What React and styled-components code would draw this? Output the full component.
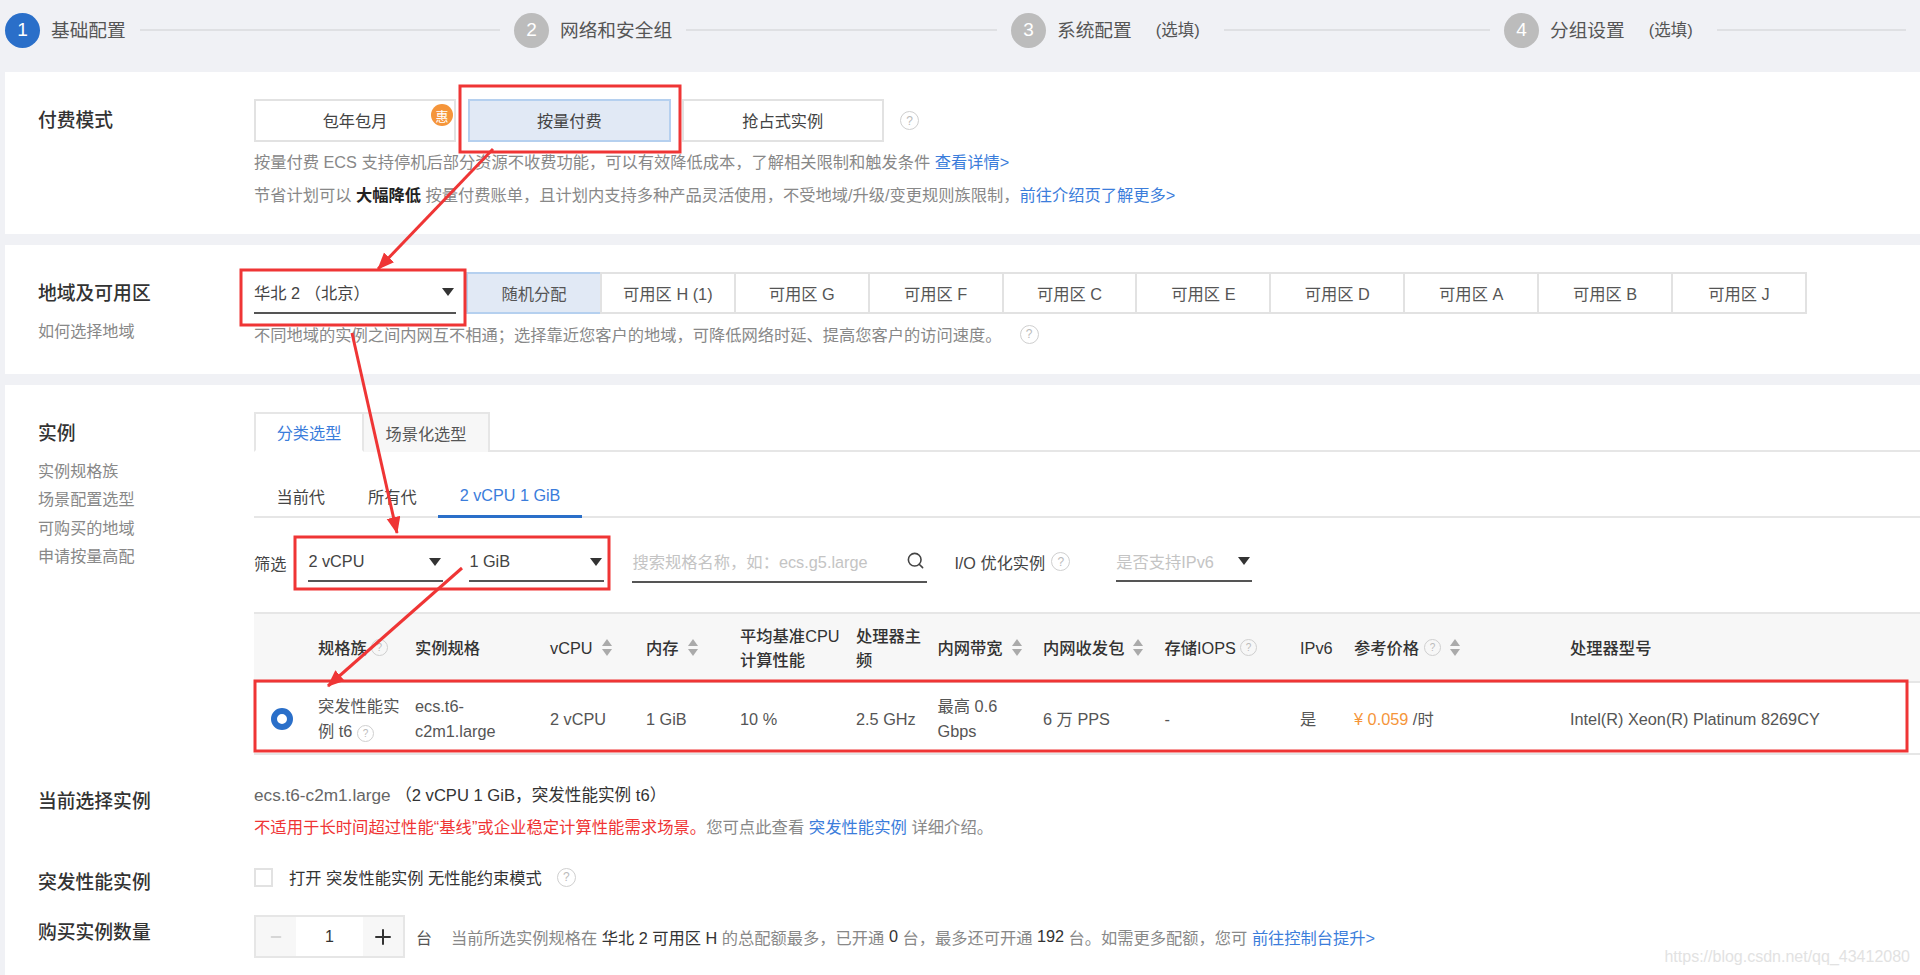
import styled, { createGlobalStyle } from "styled-components";
import { Search, Plus, Minus } from "lucide-react";

const Global = createGlobalStyle`
    html, body {
        margin: 0;
        padding: 0;
        overflow: hidden;
        background-color: #f0f1f5;
    }
    * {
        box-sizing: border-box;
    }
`
const Page = styled.div`
    position: relative;
    display: flex;
    flex-direction: column;
    width: 1920px;
    height: 975px;
    overflow: hidden;
    background-color: #f0f1f5;
    font-family: "Liberation Sans", "Noto Sans CJK SC", sans-serif;
    font-size: 16px;
    color: #555;
`
const Steps = styled.div`
    display: flex;
    align-items: center;
    height: 72px;
    padding: 0 0 12px 5px;
`
const Step = styled.div`
    display: flex;
    align-items: center;
    flex: ${({$last})=>$last ? "1" : "none"};
    width: ${({$w})=>$w ? `${$w}px` : "auto"};
`
const StepNum = styled.div`
    display: flex;
    justify-content: center;
    align-items: center;
    flex: none;
    width: 35px;
    height: 35px;
    border-radius: 50%;
    font-size: 19px;
    color: #fff;
    background-color: ${({$on})=>$on ? "#2a6fc9" : "#bcbcbc"};
`
const StepName = styled.div`
    margin-left: 11px;
    padding-bottom: 4px;
    font-size: 18.7px;
    color: #555;
    white-space: nowrap;
`
const StepOpt = styled.div`
    margin-left: 24px;
    margin-right: 10px;
    padding-bottom: 3px;
    font-size: 16.5px;
    color: #555;
    white-space: nowrap;
`
const StepLine = styled.div`
    flex: 1;
    height: 2px;
    margin: 0 14px;
    background-color: #dfe0e3;
`
const Section = styled.section`
    display: flex;
    flex-direction: column;
    flex: ${({$fill})=>$fill ? "1" : "none"};
    height: ${({$h})=>$h ? `${$h}px` : "auto"};
    margin: 0 0 ${({$fill})=>$fill ? 0 : 11}px 5px;
    padding: 27px 0 0 33px;
    background-color: #fff;
`
const Row = styled.div`
    display: flex;
    margin-top: ${({$mt})=>$mt || 0}px;
`
const Side = styled.div`
    flex: none;
    width: 216px;
`
const Main = styled.div`
    flex: 1;
    min-width: 0;
`
const Label = styled.div`
    font-size: 18.8px;
    line-height: 44px;
    font-weight: 500;
    color: #333;
`
const SideLinks = styled.div`
    margin-top: 1px;
    font-size: 16.1px;
    line-height: 28.3px;
    color: #888;
`
const BtnRow = styled.div`
    display: flex;
    align-items: center;
`
const PayBtn = styled.div`
    position: relative;
    display: flex;
    justify-content: center;
    align-items: center;
    width: ${({$w})=>$w}px;
    height: 43px;
    margin-right: ${({$mr})=>$mr}px;
    padding-bottom: 1px;
    font-size: 16.2px;
    color: #444;
    border: 2px solid ${({$on})=>$on ? "#b5d0ef" : "#e2e2e2"};
    background-color: ${({$on})=>$on ? "#e1e9f5" : "#fff"};
`
const Badge = styled.div`
    position: absolute;
    top: 3px;
    right: 1px;
    display: flex;
    justify-content: center;
    align-items: center;
    width: 22px;
    height: 22px;
    border-radius: 50%;
    font-size: 13px;
    color: #fff;
    background-color: #f5953a;
`
const Help = styled.span`
    display: inline-flex;
    justify-content: center;
    align-items: center;
    flex: none;
    width: ${({$s})=>$s || 19}px;
    height: ${({$s})=>$s || 19}px;
    margin-left: ${({$ml})=>$ml || 0}px;
    border: 1.5px solid #cfcfcf;
    border-radius: 50%;
    font-size: ${({$s})=>($s || 19) - 7}px;
    color: #bbb;
`
const Desc = styled.div`
    display: flex;
    align-items: center;
    height: ${({$h})=>$h || 33}px;
    margin-top: ${({$mt})=>$mt || 0}px;
    font-size: 16.25px;
    color: #888;
    white-space: pre;
`
const Link = styled.span`
    color: #3b7ddb;
`
const Strong = styled.b`
    font-weight: 700;
    color: #222;
`
const Dark = styled.span`
    color: #333;
`
const Red = styled.span`
    color: #ef3535;
`
const Select = styled.div`
    display: flex;
    justify-content: space-between;
    align-items: center;
    flex: none;
    width: ${({$w})=>$w}px;
    height: ${({$h})=>$h || 38}px;
    margin-left: ${({$ml})=>$ml || 0}px;
    padding: 0 2px ${({$ph})=>$ph ? 3 : 1}px 0;
    font-size: 16.3px;
    color: ${({$ph})=>$ph ? "#c4c4c4" : "#444"};
    border-bottom: 2px solid #555;
    white-space: pre;
`
const Caret = styled.span`
    flex: none;
    width: 0;
    height: 0;
    border-left: 6px solid transparent;
    border-right: 6px solid transparent;
    border-top: 8px solid #333;
`
const Zones = styled.div`
    display: flex;
    margin-left: 10px;
    border: 2px solid #e2e2e2;
    border-left: none;
`
const Zone = styled.div`
    display: flex;
    justify-content: center;
    align-items: center;
    width: 133.9px;
    height: 42px;
    margin-top: -2px;
    margin-bottom: -2px;
    font-size: 16.3px;
    color: #555;
    border-left: 2px solid ${({$on})=>$on ? "#b5d0ef" : "#e2e2e2"};
    border-top: 2px solid ${({$on})=>$on ? "#b5d0ef" : "#e2e2e2"};
    border-bottom: 2px solid ${({$on})=>$on ? "#b5d0ef" : "#e2e2e2"};
    background-color: ${({$on})=>$on ? "#e1e9f5" : "#fff"};
`
const Tabs = styled.div`
    display: flex;
    height: 40px;
    border-bottom: 2px solid #e6e6e6;
`
const Tab = styled.div`
    display: flex;
    justify-content: center;
    align-items: center;
    width: ${({$w})=>$w}px;
    height: 40px;
    font-size: 16.2px;
    color: ${({$on})=>$on ? "#3b7ddb" : "#555"};
    border: 2px solid #e6e6e6;
    border-left-width: ${({$on})=>$on ? 2 : 0}px;
    border-bottom: ${({$on})=>$on ? "2px solid #fff" : "none"};
    background-color: ${({$on})=>$on ? "#fff" : "#f7f7f7"};
`
const SubTabs = styled.div`
    display: flex;
    align-items: flex-end;
    height: 66px;
    padding-left: 1px;
    border-bottom: 2px solid #e6e6e6;
`
const SubTab = styled.div`
    display: flex;
    justify-content: center;
    align-items: center;
    height: 45px;
    padding: 3px 21.5px 0;
    margin-bottom: -2px;
    font-size: 16.2px;
    color: ${({$on})=>$on ? "#3b7ddb" : "#444"};
    border-bottom: 3px solid ${({$on})=>$on ? "#2a6fc9" : "transparent"};
`
const Filters = styled.div`
    display: flex;
    align-items: center;
    height: 94px;
    padding-bottom: 4px;
    font-size: 16.2px;
    color: #444;
`
const IoLabel = styled.div`
    display: flex;
    align-items: center;
    margin-left: 27px;
    padding-bottom: 3px;
`
const Table = styled.div`
    border-top: 2px solid #e6e6e6;
`
const Cols = styled.div`
    display: grid;
    grid-template-columns: 64px 97px 135px 96px 94px 116px 81.5px 105.5px 121.5px 135.5px 54px 216px 1fr;
    align-items: center;
    height: ${({$h})=>$h}px;
    padding-top: ${({$head})=>$head ? 0 : 2}px;
    border-bottom: 2px solid #e6e6e6;
    background-color: ${({$head})=>$head ? "#f7f7f7" : "#fff"};
    color: ${({$head})=>$head ? "#333" : "#555"};
    font-weight: ${({$head})=>$head ? 500 : 400};
    font-size: 16.3px;
    line-height: ${({$head})=>$head ? 24 : 25}px;
`
const Cell = styled.div`
    display: flex;
    align-items: center;
    white-space: nowrap;
`
const Radio = styled.div`
    width: 22px;
    height: 22px;
    margin-left: 17px;
    border: 6px solid #2a6fc9;
    border-radius: 50%;
    background-color: #fff;
`
const SortIcon = styled.svg`
    flex: none;
    width: 10px;
    height: 17px;
    margin-left: ${({$ml})=>$ml || 9}px;
`
const Price = styled.span`
    color: #f5953a;
`
const Lines = styled.div`
    font-size: 16.35px;
    line-height: 31.5px;
    color: #888;
    white-space: pre;
`
const EcsName = styled.span`
    font-size: 17.2px;
    color: #666;
`
const EcsSpec = styled.span`
    font-size: 16.6px;
    color: #333;
`
const Check = styled.div`
    flex: none;
    width: 19px;
    height: 19px;
    border: 2px solid #e2e2e2;
    background-color: #fff;
`
const Inline = styled.div`
    display: flex;
    align-items: center;
    height: 34px;
    padding-bottom: 2px;
    font-size: 16.25px;
    color: #333;
    white-space: pre;
`
const CheckText = styled.span`
    margin-left: 16px;
`
const Stepper = styled.div`
    display: flex;
    width: 151px;
    height: 43px;
    border: 2px solid #e6e6e6;
`
const StepBtn = styled.div`
    display: flex;
    justify-content: center;
    align-items: center;
    width: 40px;
    background-color: #f7f7f7;
`
const StepVal = styled.div`
    display: flex;
    justify-content: center;
    align-items: center;
    flex: 1;
    font-size: 16px;
    color: #333;
`
const QtyRow = styled.div`
    display: flex;
    align-items: center;
    margin-top: 4px;
    font-size: 16.25px;
    color: #888;
    white-space: pre;
`
const Unit = styled.span`
    margin: 0 19px 0 11px;
    color: #555;
    font-size: 16px;
`
const Watermark = styled.div`
    position: absolute;
    right: 10px;
    bottom: 9px;
    font-size: 16px;
    color: #e2e2e2;
`
const Overlay = styled.svg`
    position: absolute;
    left: 0;
    top: 0;
    width: 1920px;
    height: 975px;
    pointer-events: none;
`

const zones = ["可用区 H (1)", "可用区 G", "可用区 F", "可用区 C", "可用区 E", "可用区 D", "可用区 A", "可用区 B", "可用区 J"]

function Sort({ml}) {
    return (
        <SortIcon viewBox="0 0 10 17" $ml={ml}>
            <path d="M5 0 L10 7 L0 7 Z" fill="#aaa"/>
            <path d="M5 17 L10 10 L0 10 Z" fill="#aaa"/>
        </SortIcon>
    )
}

function Annotations() {
    const red = "#ef3535"
    return (
        <Overlay viewBox="0 0 1920 975">
            <defs>
                <marker id="head" markerUnits="userSpaceOnUse" markerWidth="18" markerHeight="16" refX="16" refY="7" orient="auto">
                    <path d="M0 0 L17 7 L0 14 Z" fill={red}/>
                </marker>
            </defs>
            <g fill="none" stroke={red} strokeWidth="3">
                <rect x="460" y="86" width="220" height="66"/>
                <rect x="241" y="270" width="224" height="55"/>
                <rect x="295" y="537" width="314" height="52"/>
                <rect x="255" y="681" width="1652" height="70"/>
                <line x1="493" y1="149" x2="378" y2="269" markerEnd="url(#head)"/>
                <line x1="352" y1="333" x2="397" y2="533" markerEnd="url(#head)"/>
                <line x1="462" y1="568" x2="328" y2="686" markerEnd="url(#head)"/>
            </g>
        </Overlay>
    )
}

export default function App() {
    return <>
        <Global/>
        <Page>
            <Steps>
                <Step $w={509}>
                    <StepNum $on>1</StepNum>
                    <StepName>基础配置</StepName>
                    <StepLine/>
                </Step>
                <Step $w={497}>
                    <StepNum>2</StepNum>
                    <StepName>网络和安全组</StepName>
                    <StepLine/>
                </Step>
                <Step $w={493}>
                    <StepNum>3</StepNum>
                    <StepName>系统配置</StepName>
                    <StepOpt>(选填)</StepOpt>
                    <StepLine/>
                </Step>
                <Step $last>
                    <StepNum>4</StepNum>
                    <StepName>分组设置</StepName>
                    <StepOpt>(选填)</StepOpt>
                    <StepLine/>
                </Step>
            </Steps>

            <Section $h={162}>
                <Row>
                    <Side><Label>付费模式</Label></Side>
                    <Main>
                        <BtnRow>
                            <PayBtn $w={202} $mr={12}>包年包月<Badge>惠</Badge></PayBtn>
                            <PayBtn $w={202.5} $mr={11} $on>按量付费</PayBtn>
                            <PayBtn $w={202.5} $mr={16}>抢占式实例</PayBtn>
                            <Help>?</Help>
                        </BtnRow>
                        <Desc $mt={2}>按量付费 ECS 支持停机后部分资源不收费功能，可以有效降低成本，了解相关限制和触发条件 <Link>查看详情&gt;</Link></Desc>
                        <Desc>节省计划可以 <Strong>大幅降低</Strong> 按量付费账单，且计划内支持多种产品灵活使用，不受地域/升级/变更规则族限制，<Link>前往介绍页了解更多&gt;</Link></Desc>
                    </Main>
                </Row>
            </Section>

            <Section $h={129}>
                <Row>
                    <Side>
                        <Label>地域及可用区</Label>
                        <SideLinks>如何选择地域</SideLinks>
                    </Side>
                    <Main>
                        <BtnRow>
                            <Select $w={202} $h={42}>华北 2 （北京）<Caret/></Select>
                            <Zones>
                                <Zone $on>随机分配</Zone>
                                {zones.map((z)=><Zone key={z}>{z}</Zone>)}
                            </Zones>
                        </BtnRow>
                        <Desc $h={24} $mt={8}>不同地域的实例之间内网互不相通；选择靠近您客户的地域，可降低网络时延、提高您客户的访问速度。<Help $ml={18}>?</Help></Desc>
                    </Main>
                </Row>
            </Section>

            <Section $fill>
                <Row>
                    <Side>
                        <Label>实例</Label>
                        <SideLinks>
                            实例规格族<br/>
                            场景配置选型<br/>
                            可购买的地域<br/>
                            申请按量高配
                        </SideLinks>
                    </Side>
                    <Main>
                        <Tabs>
                            <Tab $w={110} $on>分类选型</Tab>
                            <Tab $w={126}>场景化选型</Tab>
                        </Tabs>
                        <SubTabs>
                            <SubTab>当前代</SubTab>
                            <SubTab>所有代</SubTab>
                            <SubTab $on>2 vCPU 1 GiB</SubTab>
                        </SubTabs>
                        <Filters>
                            筛选
                            <Select $w={135} $ml={22}>2 vCPU<Caret/></Select>
                            <Select $w={135} $ml={26}>1 GiB<Caret/></Select>
                            <Select $w={295} $ml={28} $h={40} $ph>搜索规格名称，如：ecs.g5.large<Search size={19} color="#444"/></Select>
                            <IoLabel>I/O 优化实例<Help $ml={6}>?</Help></IoLabel>
                            <Select $w={136} $ml={46} $ph>是否支持IPv6<Caret/></Select>
                        </Filters>
                        <Table>
                            <Cols $h={69} $head>
                                <Cell/>
                                <Cell>规格族<Help $s={17} $ml={4}>?</Help></Cell>
                                <Cell>实例规格</Cell>
                                <Cell>vCPU<Sort/></Cell>
                                <Cell>内存<Sort/></Cell>
                                <Cell><span>平均基准CPU<br/>计算性能</span></Cell>
                                <Cell><span>处理器主<br/>频</span></Cell>
                                <Cell>内网带宽<Sort/></Cell>
                                <Cell>内网收发包<Sort/></Cell>
                                <Cell>存储IOPS<Help $s={17} $ml={4}>?</Help></Cell>
                                <Cell>IPv6</Cell>
                                <Cell>参考价格<Help $s={17} $ml={5}>?</Help><Sort/></Cell>
                                <Cell>处理器型号</Cell>
                            </Cols>
                            <Cols $h={72}>
                                <Cell><Radio/></Cell>
                                <Cell><span>突发性能实<br/>例 t6 <Help $s={17}>?</Help></span></Cell>
                                <Cell><span>ecs.t6-<br/>c2m1.large</span></Cell>
                                <Cell>2 vCPU</Cell>
                                <Cell>1 GiB</Cell>
                                <Cell>10 %</Cell>
                                <Cell>2.5 GHz</Cell>
                                <Cell><span>最高 0.6<br/>Gbps</span></Cell>
                                <Cell>6 万 PPS</Cell>
                                <Cell>-</Cell>
                                <Cell>是</Cell>
                                <Cell><span><Price>¥ 0.059</Price> /时</span></Cell>
                                <Cell>Intel(R) Xeon(R) Platinum 8269CY</Cell>
                            </Cols>
                        </Table>
                    </Main>
                </Row>

                <Row $mt={25}>
                    <Side><Label>当前选择实例</Label></Side>
                    <Main>
                        <Lines>
                            <EcsName>ecs.t6-c2m1.large</EcsName> <EcsSpec>（2 vCPU 1 GiB，突发性能实例 t6）</EcsSpec><br/>
                            <Red>不适用于长时间超过性能“基线”或企业稳定计算性能需求场景。</Red>您可点此查看 <Link>突发性能实例</Link> 详细介绍。
                        </Lines>
                    </Main>
                </Row>

                <Row $mt={18}>
                    <Side><Label>突发性能实例</Label></Side>
                    <Main>
                        <Inline>
                            <Check/>
                            <CheckText>打开 突发性能实例 无性能约束模式</CheckText>
                            <Help $ml={15}>?</Help>
                        </Inline>
                    </Main>
                </Row>

                <Row $mt={6}>
                    <Side><Label>购买实例数量</Label></Side>
                    <Main>
                        <QtyRow>
                            <Stepper>
                                <StepBtn><Minus size={16} color="#ccc"/></StepBtn>
                                <StepVal>1</StepVal>
                                <StepBtn><Plus size={24} color="#333"/></StepBtn>
                            </Stepper>
                            <Unit>台</Unit>
                            当前所选实例规格在 <Dark>华北 2 可用区 H</Dark> 的总配额最多，已开通 <Dark>0</Dark> 台，最多还可开通 <Dark>192</Dark> 台。如需更多配额，您可 <Link>前往控制台提升&gt;</Link>
                        </QtyRow>
                    </Main>
                </Row>
            </Section>

            <Annotations/>
            <Watermark>https://blog.csdn.net/qq_43412080</Watermark>
        </Page>
    </>
}
